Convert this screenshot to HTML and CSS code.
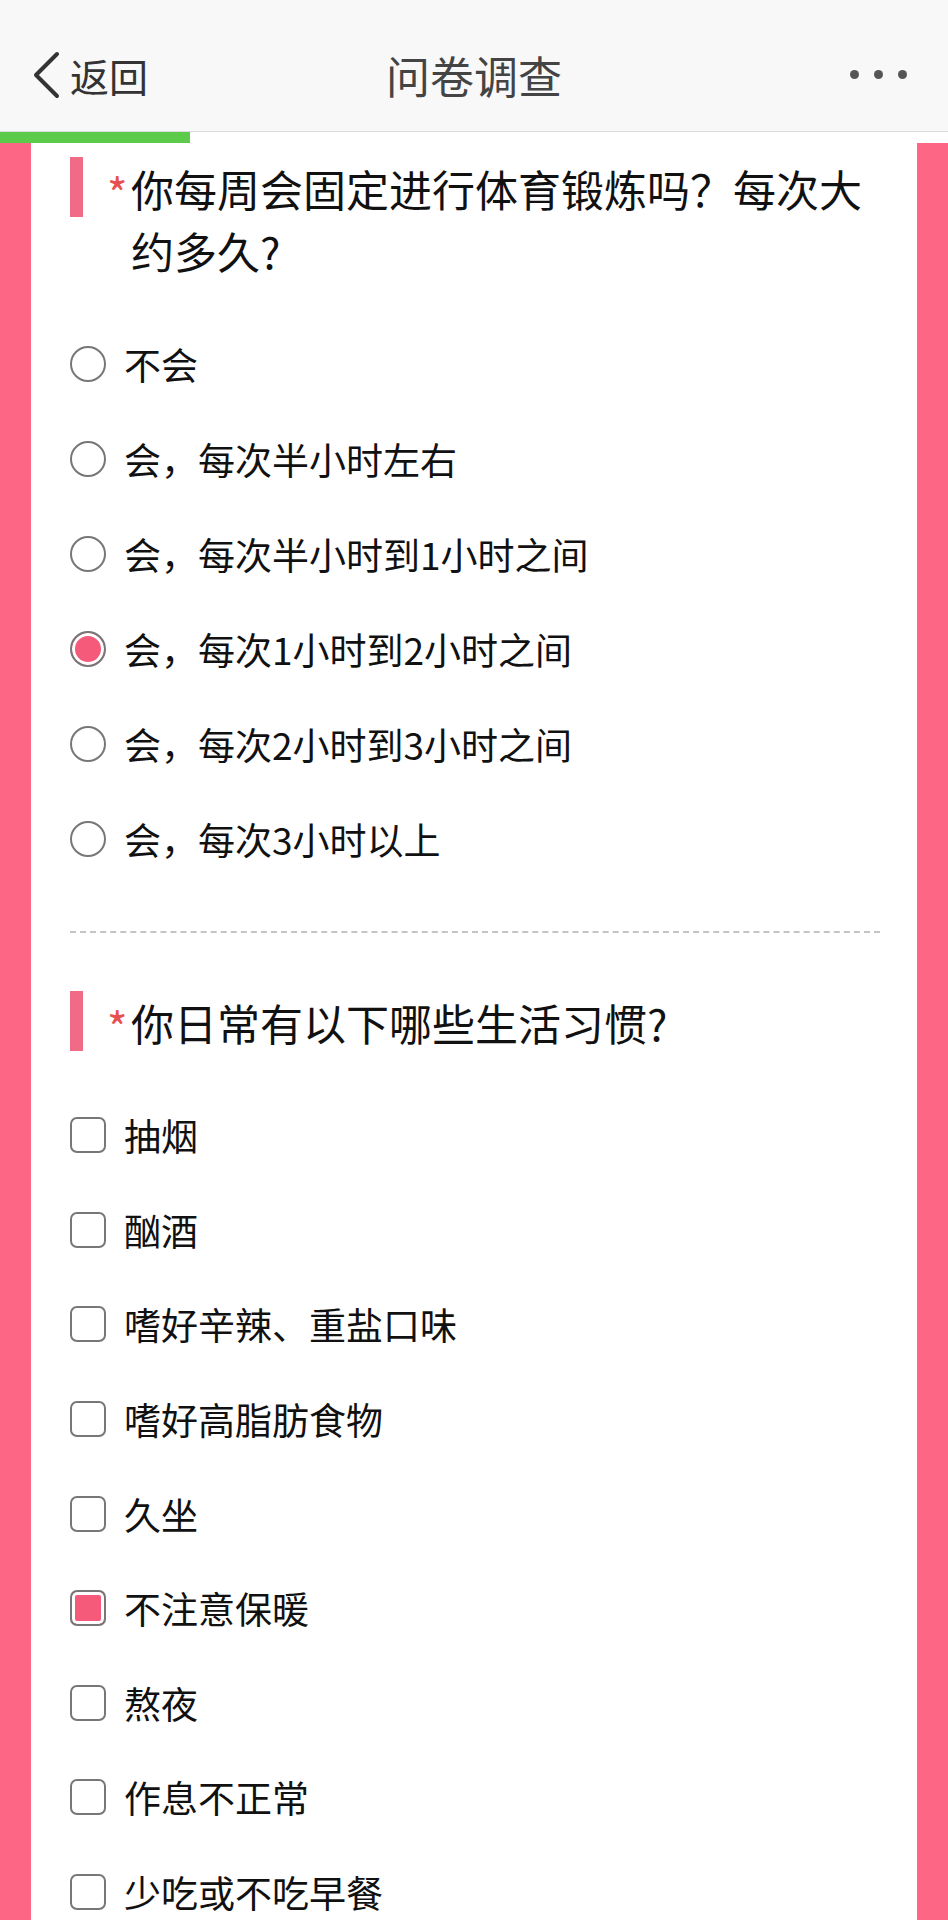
FILE: index.html
```html
<!DOCTYPE html>
<html lang="zh-CN">
<head>
    <meta charset="UTF-8">
    <meta name="viewport" content="width=device-width, initial-scale=1.0">
    <title>问卷调查</title>
    <link rel="stylesheet" href="styles.css">
</head>
<body>
    <header class="topbar">
        <a class="back" href="#">
            <svg class="back-icon" width="30" height="48" viewBox="0 0 30 48">
                <path d="M26 3 L5 24 L26 45" fill="none" stroke="#333" stroke-width="4" stroke-linecap="round" stroke-linejoin="round"/>
            </svg>
            <span>返回</span>
        </a>
        <h1 class="title">问卷调查</h1>
        <div class="more">
            <span class="dot"></span><span class="dot"></span><span class="dot"></span>
        </div>
    </header>

    <div class="progress"><div class="progress-fill" style="width: 190px"></div></div>

    <main class="page">
        <div class="card">
            <section class="question">
                <div class="q-title">
                    <span class="q-bar"></span>
                    <span class="q-star">*</span>
                    <span class="q-text">你每周会固定进行体育锻炼吗？每次大约多久?</span>
                </div>
                <ul class="options">
                    <li class="option"><span class="radio"></span>不会</li>
                    <li class="option"><span class="radio"></span>会，每次半小时左右</li>
                    <li class="option"><span class="radio"></span>会，每次半小时到1小时之间</li>
                    <li class="option"><span class="radio checked"></span>会，每次1小时到2小时之间</li>
                    <li class="option"><span class="radio"></span>会，每次2小时到3小时之间</li>
                    <li class="option"><span class="radio"></span>会，每次3小时以上</li>
                </ul>
            </section>

            <hr class="divider">

            <section class="question">
                <div class="q-title">
                    <span class="q-bar"></span>
                    <span class="q-star">*</span>
                    <span class="q-text">你日常有以下哪些生活习惯?</span>
                </div>
                <ul class="options checks">
                    <li class="option"><span class="check"></span>抽烟</li>
                    <li class="option"><span class="check"></span>酗酒</li>
                    <li class="option"><span class="check"></span>嗜好辛辣、重盐口味</li>
                    <li class="option"><span class="check"></span>嗜好高脂肪食物</li>
                    <li class="option"><span class="check"></span>久坐</li>
                    <li class="option"><span class="check checked"></span>不注意保暖</li>
                    <li class="option"><span class="check"></span>熬夜</li>
                    <li class="option"><span class="check"></span>作息不正常</li>
                    <li class="option"><span class="check"></span>少吃或不吃早餐</li>
                </ul>
            </section>
        </div>
    </main>
</body>
</html>
```

FILE: styles.css
```css
* {
    box-sizing: border-box;
}
body {
    margin: 0;
    font-family: "Noto Sans CJK SC", "Noto Sans", sans-serif;
    color: #111;
    background-color: #fe6686;
}
ul {
    list-style: none;
    margin: 0;
    padding: 0;
}

/* header */
.topbar {
    display: grid;
    grid-template-columns: 1fr auto 1fr;
    align-items: center;
    height: 132px;
    padding: 18px 31px 0 31px;
    background-color: #f8f8f8;
    border-bottom: 1px solid #dcdcdc;
}
.back {
    display: flex;
    align-items: center;
    gap: 9px;
    color: #333;
    text-decoration: none;
    font-size: 39px;
    line-height: 48px;
}
.back-icon {
    flex: none;
}
.title {
    margin: 0;
    font-size: 44px;
    font-weight: 400;
    color: #444;
    line-height: 48px;
}
.more {
    display: flex;
    justify-content: flex-end;
    gap: 15px;
    padding-right: 10px;
}
.dot {
    width: 9px;
    height: 9px;
    border-radius: 50%;
    background-color: #555;
}

/* progress */
.progress {
    height: 11px;
    background-color: #fff;
}
.progress-fill {
    height: 100%;
    background-color: #5ccb4a;
}

/* card */
.page {
    padding: 0 31px;
}
.card {
    background-color: #fff;
    padding: 14px 37px 0 39px;
    min-height: 1800px;
}
.q-title {
    display: flex;
    align-items: flex-start;
    font-size: 43px;
    line-height: 62px;
}
.q-bar {
    flex: none;
    width: 13px;
    height: 60px;
    background-color: #f06b86;
}
.q-star {
    flex: none;
    width: 24px;
    height: 62px;
    margin-left: 24px;
    font-size: 44px;
    line-height: 70px;
    color: #e8504f;
}
.q-text {
    flex: 1;
}

/* options */
.options {
    margin-top: 35px;
}
.checks {
    margin-top: 35px;
}
.option {
    display: flex;
    align-items: center;
    gap: 18px;
    height: 95px;
    font-size: 37px;
    color: #111;
}
.checks .option {
    height: 94.6px;
}
.radio,
.check {
    flex: none;
    width: 36px;
    height: 36px;
    border: 2.5px solid #777;
    border-radius: 50%;
    background-color: #fff;
}
.check {
    border-radius: 7px;
}
.radio.checked,
.check.checked {
    background-color: #f55a7a;
    box-shadow: inset 0 0 0 3px #fff;
}

.divider {
    margin: 45px 0 58px 0;
    border: none;
    border-top: 2px dashed #c4c4c4;
}
```
